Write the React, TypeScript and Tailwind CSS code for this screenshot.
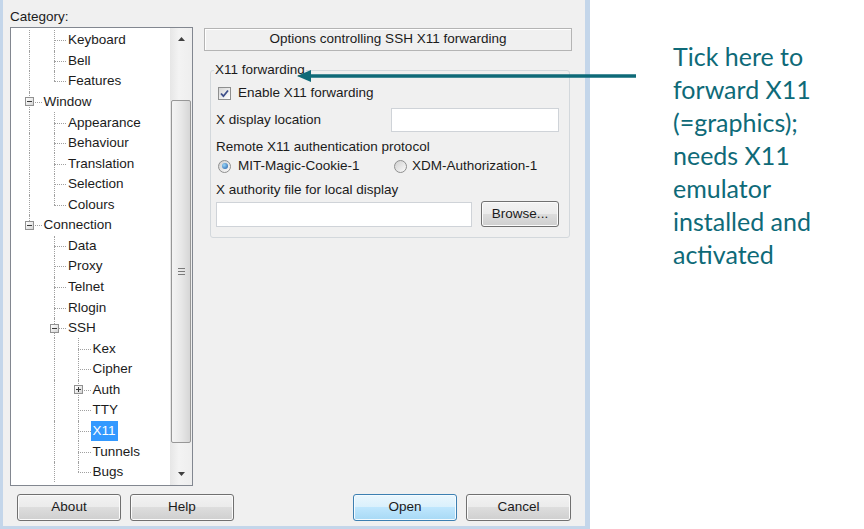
import React from 'react';

type Row = {
  label: string;
  level: number;
  guides: boolean[];
  last?: boolean;
  exp?: '-' | '+';
  selected?: boolean;
};

const rows: Row[] = [
  { label: 'Keyboard', level: 1, guides: [true] },
  { label: 'Bell', level: 1, guides: [true] },
  { label: 'Features', level: 1, guides: [true], last: true },
  { label: 'Window', level: 0, guides: [], exp: '-' },
  { label: 'Appearance', level: 1, guides: [true] },
  { label: 'Behaviour', level: 1, guides: [true] },
  { label: 'Translation', level: 1, guides: [true] },
  { label: 'Selection', level: 1, guides: [true] },
  { label: 'Colours', level: 1, guides: [true], last: true },
  { label: 'Connection', level: 0, guides: [], exp: '-', last: true },
  { label: 'Data', level: 1, guides: [false] },
  { label: 'Proxy', level: 1, guides: [false] },
  { label: 'Telnet', level: 1, guides: [false] },
  { label: 'Rlogin', level: 1, guides: [false] },
  { label: 'SSH', level: 1, guides: [false], exp: '-' },
  { label: 'Kex', level: 2, guides: [false, true] },
  { label: 'Cipher', level: 2, guides: [false, true] },
  { label: 'Auth', level: 2, guides: [false, true], exp: '+' },
  { label: 'TTY', level: 2, guides: [false, true] },
  { label: 'X11', level: 2, guides: [false, true], selected: true },
  { label: 'Tunnels', level: 2, guides: [false, true] },
  { label: 'Bugs', level: 2, guides: [false, true], last: true },
];

const btn =
  'flex items-center justify-center rounded-[3px] border border-[#707070] bg-[linear-gradient(#f2f2f2,#ebebeb_50%,#dddddd_50%,#cfcfcf)] shadow-[inset_0_0_0_1px_#fbfbfb]';

const Expander = ({ sign }: { sign: '-' | '+' }) => (
  <span className="absolute left-[8px] top-[calc(50%-4.5px)] w-[9px] h-[9px] border border-[#919191] bg-[linear-gradient(135deg,#ffffff,#d6d6d6)]">
    <span className="absolute left-[1px] top-[3px] w-[5px] h-px bg-[#3a3a3a]" />
    {sign === '+' && <span className="absolute left-[3px] top-[1px] w-px h-[5px] bg-[#3a3a3a]" />}
  </span>
);

const Cell = ({ type, last, exp }: { type: 'guide' | 'blank' | 'node'; last?: boolean; exp?: '-' | '+' }) => (
  <div className="relative w-[24.5px] shrink-0 self-stretch">
    {type === 'guide' && (
      <span className="absolute left-[12px] top-0 bottom-0 border-l border-dotted border-[#a0a0a0]" />
    )}
    {type === 'node' && (
      <>
        <span
          className={`absolute left-[12px] top-0 border-l border-dotted border-[#a0a0a0] ${last ? 'h-1/2' : 'bottom-0'}`}
        />
        <span className="absolute left-[12px] right-0 top-1/2 border-t border-dotted border-[#a0a0a0]" />
        {exp && <Expander sign={exp} />}
      </>
    )}
  </div>
);

const Arrow = ({ down }: { down?: boolean }) => (
  <svg width="7" height="4" viewBox="0 0 7 4">
    <polygon points={down ? '0,0 7,0 3.5,4' : '0,4 7,4 3.5,0'} fill="#404040" />
  </svg>
);

const Tree = () => (
  <div className="flex h-[459px] w-[183px] border border-[#828790] bg-white">
    <div className="flex-1 pl-[6px] pt-[2px] overflow-hidden">
      {rows.map((r) => (
        <div key={r.label} className="flex h-[20.57px] items-center">
          {r.guides.map((g, k) => (
            <Cell key={k} type={g ? 'guide' : 'blank'} />
          ))}
          <Cell type="node" last={r.last} exp={r.exp} />
          <span className={`px-[2px] leading-[20px] whitespace-nowrap ${r.selected ? 'bg-[#3399ff] text-white' : ''}`}>
            {r.label}
          </span>
        </div>
      ))}
    </div>
    {/* scrollbar */}
    <div className="flex w-[22px] flex-col bg-[linear-gradient(90deg,#e6e6e6,#f3f3f3_40%,#eeeeee)]">
      <div className="flex h-[22px] items-center justify-center">
        <Arrow />
      </div>
      <div className="h-[50px]" />
      <div className="mx-[1px] flex h-[343px] flex-col items-center justify-center gap-[2px] rounded-[2px] border border-[#979797] bg-[linear-gradient(90deg,#f4f4f4,#e8e8e8_50%,#d6d6d6)]">
        <span className="h-px w-[7px] bg-[#7a7a7a]" />
        <span className="h-px w-[7px] bg-[#7a7a7a]" />
        <span className="h-px w-[7px] bg-[#7a7a7a]" />
      </div>
      <div className="flex-1" />
      <div className="flex h-[22px] items-center justify-center">
        <Arrow down />
      </div>
    </div>
  </div>
);

const Radio = ({ on }: { on?: boolean }) => (
  <span className="flex h-[13px] w-[13px] items-center justify-center rounded-full border border-[#8e8f8f] bg-[linear-gradient(135deg,#d0d0d0,#fbfbfb)]">
    {on && <span className="h-[6px] w-[6px] rounded-full bg-[radial-gradient(circle_at_35%_35%,#9ad6f8,#1d5aa6)]" />}
  </span>
);

const Panel = () => (
  <div className="ml-[11px] mt-[20px] w-[368px]">
    <div className="flex h-[23px] items-center justify-center border border-[#b4b4b4] shadow-[inset_1px_1px_0_#ffffff]">
      Options controlling SSH X11 forwarding
    </div>
    <fieldset className="ml-[6px] mr-[2px] mt-[11px] rounded-[3px] border border-[#d3d8dc] pl-[3px] pr-[10px] pb-[10px]">
      <legend className="px-[1px] leading-[16px]">X11 forwarding</legend>
      <div className="ml-[4px] mt-[7px] flex h-[16px] items-center gap-[7px]">
        <span className="flex h-[13px] w-[13px] items-center justify-center border border-[#8e8f8f] bg-[linear-gradient(135deg,#d6d6d6,#ffffff)]">
          <svg width="11" height="11" viewBox="0 0 11 11">
            <path d="M2 5.5 L4.4 8.2 L9 2.5" fill="none" stroke="#3e4f8a" strokeWidth="1.8" />
          </svg>
        </span>
        <span>Enable X11 forwarding</span>
      </div>
      <div className="ml-[2px] mt-[7px] flex h-[24px] items-center justify-between">
        <span>X display location</span>
        <span className="h-[24px] w-[168px] border border-[#cfd3d8] bg-white" />
      </div>
      <div className="ml-[2px] mt-[7px] h-[16px] leading-[16px]">Remote X11 authentication protocol</div>
      <div className="ml-[4px] mt-[3px] flex h-[16px] items-center">
        <div className="flex w-[176px] items-center gap-[7px]">
          <Radio on />
          <span>MIT-Magic-Cookie-1</span>
        </div>
        <div className="flex items-center gap-[5px]">
          <Radio />
          <span>XDM-Authorization-1</span>
        </div>
      </div>
      <div className="ml-[2px] mt-[8px] h-[16px] leading-[16px]">X authority file for local display</div>
      <div className="ml-[2px] mt-[3px] flex h-[26px] items-center gap-[9px]">
        <span className="h-[25px] w-[256px] border border-[#cfd3d8] bg-white" />
        <button className={`${btn} h-[26px] w-[78px]`}>Browse...</button>
      </div>
    </fieldset>
  </div>
);

export default function App() {
  return (
    <div className="relative flex h-[529px] w-[864px] overflow-hidden bg-white font-['Liberation_Sans',Arial,sans-serif] text-[13.5px] text-[#1b1b1b]">
      {/* dialog */}
      <div className="flex h-[529px] w-[590px] shrink-0 flex-col border-b-[3px] border-l-[3px] border-r-[5px] border-[#c4d6ea] bg-[#f0f0f0]">
        <div className="flex items-start pl-[7px] pt-[8px]">
          <div className="flex flex-col">
            <div className="h-[18px] leading-[18px]">Category:</div>
            <div className="mt-[1px]">
              <Tree />
            </div>
          </div>
          <Panel />
        </div>
        <div className="mt-[8px] flex h-[27px] justify-between pl-[14px] pr-[14px]">
          <div className="flex gap-[9px]">
            <button className={`${btn} w-[104px]`}>About</button>
            <button className={`${btn} w-[104px]`}>Help</button>
          </div>
          <div className="flex gap-[9px]">
            <button className="flex w-[104px] items-center justify-center rounded-[3px] border border-[#3c7fb1] bg-[linear-gradient(#eaf6fd,#d9f0fc_50%,#bee6fd_50%,#a7d9f5)] shadow-[inset_0_0_0_1px_#f4fbff]">
              Open
            </button>
            <button className={`${btn} w-[105px]`}>Cancel</button>
          </div>
        </div>
      </div>

      {/* annotation */}
      <div className="pl-[83px] pt-[40px] font-['Lato','Open_Sans',sans-serif] text-[25px] leading-[33px] text-[#0e6a78]">
        <div>Tick here to</div>
        <div>forward X11</div>
        <div>(=graphics);</div>
        <div>needs X11</div>
        <div>emulator</div>
        <div>installed and</div>
        <div>activated</div>
      </div>

      <svg className="absolute left-[295px] top-[68px]" width="345" height="16" viewBox="0 0 345 16">
        <line x1="14" y1="8" x2="341" y2="8" stroke="#0e6a78" strokeWidth="3.5" />
        <polygon points="2,8 16,2 16,14" fill="#0e6a78" />
      </svg>
    </div>
  );
}
